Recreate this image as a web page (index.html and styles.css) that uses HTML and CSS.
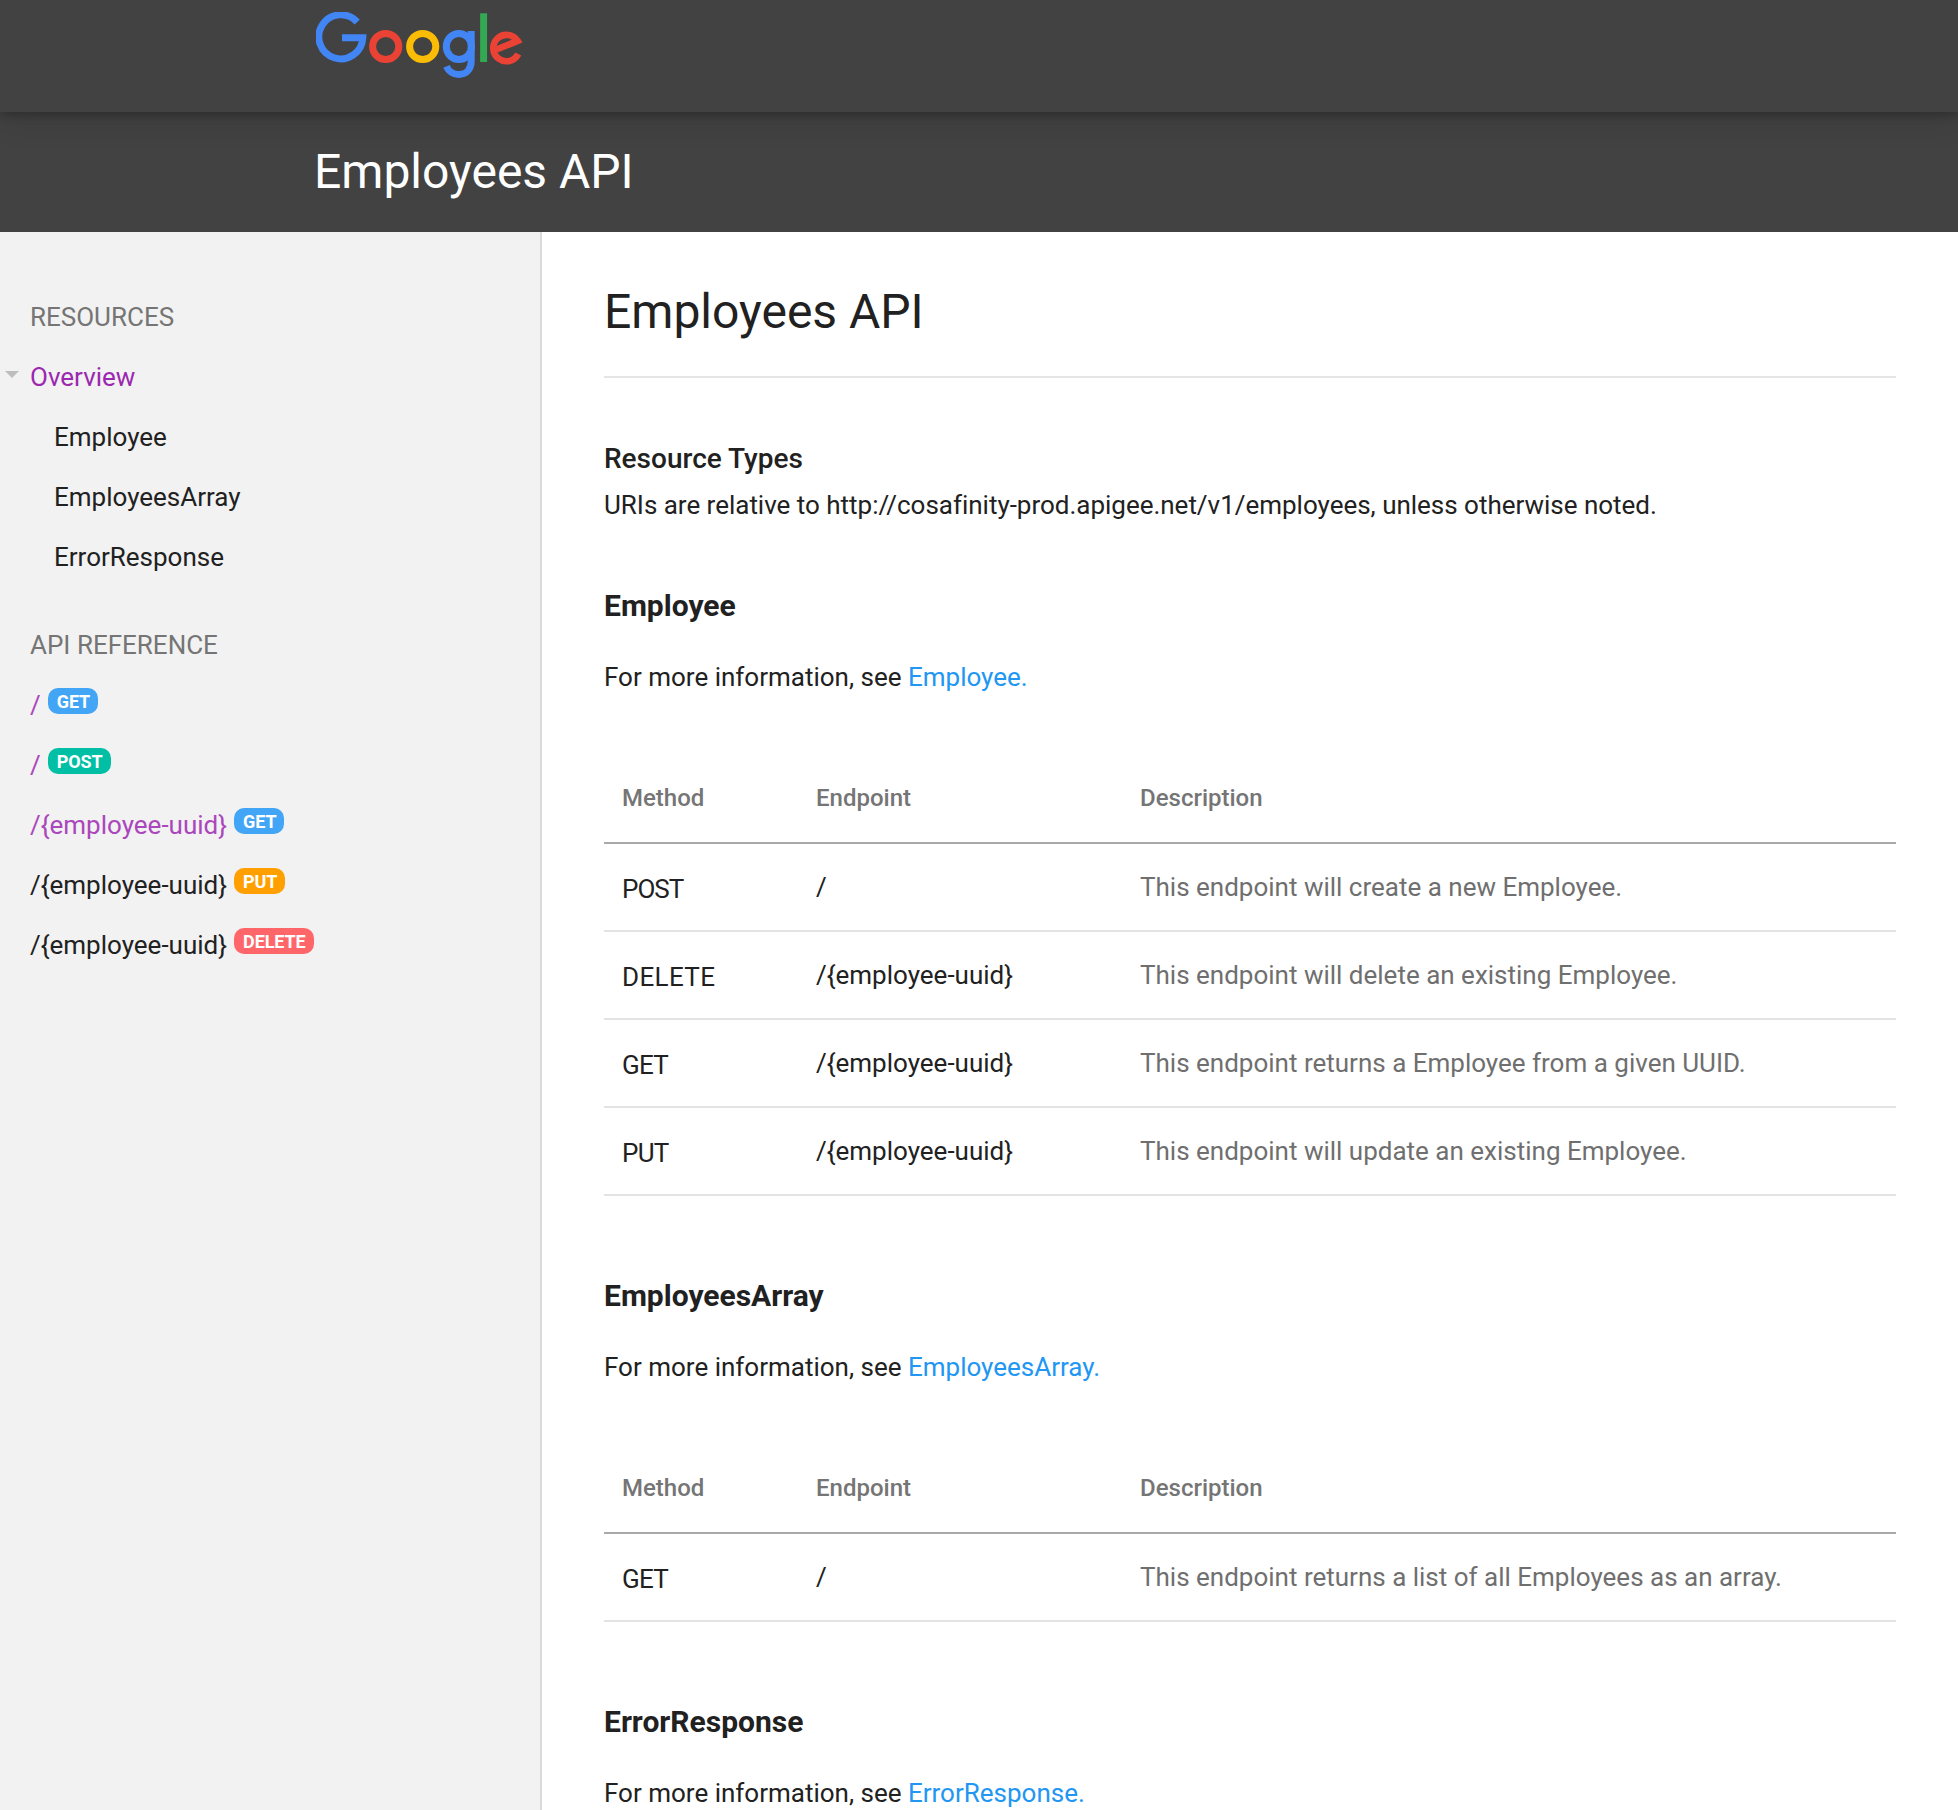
FILE: index.html
```html
<!DOCTYPE html>
<html lang="en">
<head>
<meta charset="utf-8">
<title>Employees API</title>
<link rel="stylesheet" href="styles.css">
</head>
<body>
<header class="topbar">
  <svg class="logo" width="208" height="68" viewBox="0 0 208 68" fill="none" stroke-width="7" role="img" aria-label="Google">
    <path stroke="#4285f4" d="M41.2 10.1A22 22 0 1 0 46.8 25.8H26"/>
    <circle stroke="#ea4335" cx="69.7" cy="34.5" r="13.1"/>
    <circle stroke="#fbbc05" cx="106.7" cy="34.5" r="13.1"/>
    <ellipse stroke="#4285f4" cx="142.9" cy="34.5" rx="12.6" ry="13.1"/>
    <path stroke="#4285f4" d="M155.2 19V49C155.2 58 149.5 62.5 142.7 62.5C137.5 62.5 132.6 59.4 130.4 54.4"/>
    <path stroke="#34a853" d="M167.6 1.3V50"/>
    <path stroke="#ea4335" stroke-width="6.6" d="M202.3 42A13.2 13.2 0 1 1 201.6 28.9L180.5 37.5"/>
  </svg>
</header>
<div class="titlebar">Employees API</div>
<div class="page">
  <nav class="sidebar">
    <div class="nav-heading">RESOURCES</div>
    <a class="nav-item active"><i class="caret"></i>Overview</a>
    <a class="nav-item child">Employee</a>
    <a class="nav-item child">EmployeesArray</a>
    <a class="nav-item child">ErrorResponse</a>
    <div class="nav-heading second">API REFERENCE</div>
    <a class="nav-item visited">/<span class="badge get">GET</span></a>
    <a class="nav-item visited">/<span class="badge post">POST</span></a>
    <a class="nav-item visited">/{employee-uuid}<span class="badge get">GET</span></a>
    <a class="nav-item">/{employee-uuid}<span class="badge put">PUT</span></a>
    <a class="nav-item">/{employee-uuid}<span class="badge delete">DELETE</span></a>
  </nav>
  <main class="content">
    <h1>Employees API</h1>
    <h2>Resource Types</h2>
    <p class="intro">URIs are relative to http://cosafinity-prod.apigee.net/v1/employees, unless otherwise noted.</p>

    <section class="resource first">
      <h3>Employee</h3>
      <p>For more information, see <a>Employee.</a></p>
      <table>
        <thead><tr><th class="col-method">Method</th><th class="col-endpoint">Endpoint</th><th>Description</th></tr></thead>
        <tbody>
          <tr><td class="method m-post">POST</td><td>/</td><td class="desc">This endpoint will create a new Employee.</td></tr>
          <tr><td class="method m-delete">DELETE</td><td>/{employee-uuid}</td><td class="desc">This endpoint will delete an existing Employee.</td></tr>
          <tr><td class="method m-get">GET</td><td>/{employee-uuid}</td><td class="desc">This endpoint returns a Employee from a given UUID.</td></tr>
          <tr><td class="method m-put">PUT</td><td>/{employee-uuid}</td><td class="desc">This endpoint will update an existing Employee.</td></tr>
        </tbody>
      </table>
    </section>

    <section class="resource">
      <h3>EmployeesArray</h3>
      <p>For more information, see <a>EmployeesArray.</a></p>
      <table>
        <thead><tr><th class="col-method">Method</th><th class="col-endpoint">Endpoint</th><th>Description</th></tr></thead>
        <tbody>
          <tr><td class="method m-get">GET</td><td>/</td><td class="desc">This endpoint returns a list of all Employees as an array.</td></tr>
        </tbody>
      </table>
    </section>

    <section class="resource">
      <h3>ErrorResponse</h3>
      <p>For more information, see <a>ErrorResponse.</a></p>
    </section>
  </main>
</div>
</body>
</html>
```
FILE: styles.css
```css
* { box-sizing: border-box; }
html, body { height: 1810px; }
body {
  margin: 0;
  overflow: hidden;
  display: flex;
  flex-direction: column;
  background: #fff;
  color: #212121;
  font: 26px/40px Roboto, sans-serif;
}
h1, h2, h3, p { margin: 0; }

.topbar {
  flex: none;
  height: 112px;
  padding: 12px 0 0 316px;
  background: #424242;
  box-shadow: 0 2px 10px rgba(0, 0, 0, .26), 0 4px 32px rgba(0, 0, 0, .16);
  z-index: 1;
}
.logo { display: block; }
.titlebar {
  flex: none;
  height: 120px;
  padding-left: 314px;
  background: #424242;
  color: #fff;
  font-size: 48px;
  line-height: 120px;
}

.page { flex: 1; display: flex; min-height: 0; }
.sidebar {
  flex: none;
  width: 542px;
  padding-top: 55px;
  background: #f2f2f2;
  border-right: 2px solid #d9d9d9;
}
.nav-heading, .nav-item {
  display: flex;
  align-items: center;
  height: 60px;
  padding-left: 30px;
}
.nav-heading { color: #757575; }
.nav-heading.second { margin-top: 28px; }
.nav-item.child { padding-left: 54px; }
.nav-item.active { color: #9c27b0; }
.nav-item.visited { color: #ab47bc; }
.caret {
  margin: -6px 11px 0 -25px;
  border: 7px solid transparent;
  border-top-color: #bdbdbd;
  border-bottom: 0;
}
.badge {
  height: 26px;
  margin: -8px 0 0 7px;
  padding: 0 8px 0 9px;
  border-radius: 10px;
  color: #fff;
  font-size: 18px;
  font-weight: 700;
  line-height: 27px;
  letter-spacing: -.1px;
}
.get { background: #42a5f5; }
.post { background: #00bfa5; }
.put { background: #ffa000; }
.delete { background: #ff6669; }

.content { flex: 1; padding: 48px 62px 0; }
h1 {
  height: 98px;
  border-bottom: 2px solid #e5e5e5;
  font-size: 48px;
  font-weight: 400;
  line-height: 64px;
}
h2 { margin-top: 61px; font-size: 28px; font-weight: 500; line-height: 40px; }
.intro { margin-top: 6px; letter-spacing: -.016px; }
.resource { padding-top: 80px; }
.resource.first { padding-top: 61px; }
h3 { font-size: 30px; font-weight: 700; line-height: 40px; }
.resource p { margin-top: 31px; }
.resource a { color: #2196f3; }

table {
  width: 100%;
  margin-top: 57px;
  border-collapse: separate;
  border-spacing: 0;
  table-layout: fixed;
}
th, td { padding: 0 0 0 18px; text-align: left; height: 88px; border-bottom: 2px solid #e3e3e3; }
th { height: 90px; color: #757575; font-size: 24px; font-weight: 500; border-bottom-color: #a9a9a9; }
.col-method { width: 194px; }
.col-endpoint { width: 324px; }
.desc { color: #6f6f6f; }
.method { padding-top: 4px; }
.m-post { letter-spacing: -1px; }
.m-delete { letter-spacing: .35px; }
.m-get, .m-put { letter-spacing: -.7px; }
```
